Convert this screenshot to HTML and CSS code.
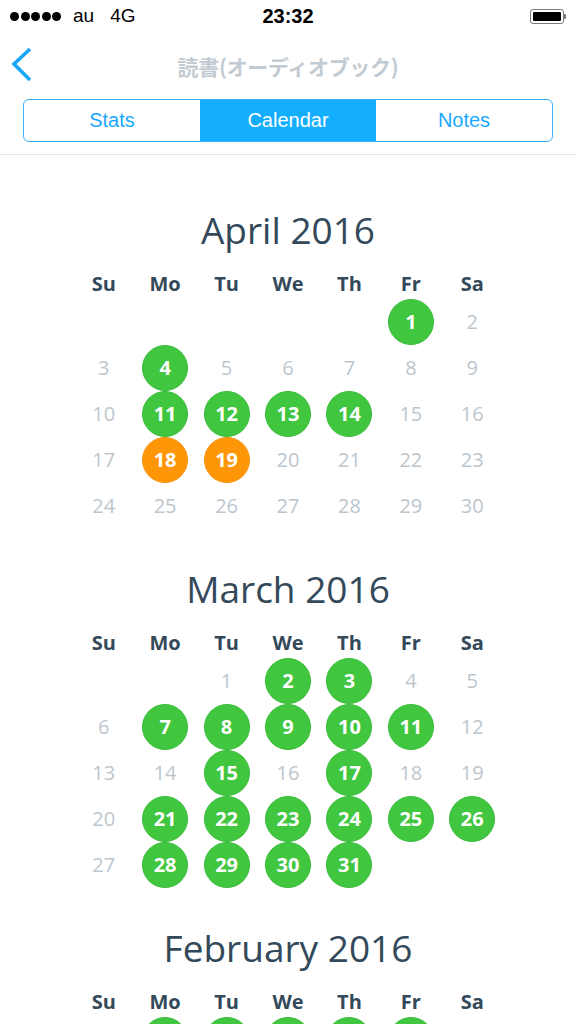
FILE: index.html
```html
<!DOCTYPE html>
<html lang="ja">
<head>
<meta charset="utf-8">
<title>読書(オーディオブック)</title>
<link rel="stylesheet" href="styles.css">
</head>
<body>
<header class="header">
  <div class="status">
    <div class="status-left">
      <span class="dots"><i></i><i></i><i></i><i></i><i></i></span>
      <span class="carrier">au</span>
      <span class="net">4G</span>
    </div>
    <div class="time">23:32</div>
    <div class="status-right">
      <span class="battery"><span class="battery-fill"></span></span><span class="battery-nub"></span>
    </div>
  </div>
  <nav class="nav">
    <a class="back" href="#" aria-label="Back">
      <svg width="24" height="36" viewBox="0 0 24 36"><polyline points="19,2 3,17 19,33" fill="none" stroke="#17a6f8" stroke-width="3.6" stroke-linecap="butt" stroke-linejoin="miter"/></svg>
    </a>
    <h1 class="nav-title">読書(オーディオブック)</h1>
    <span></span>
  </nav>
  <div class="segments">
    <div class="seg">Stats</div>
    <div class="seg seg-active">Calendar</div>
    <div class="seg">Notes</div>
  </div>
</header>

<main class="content">
  <section class="month">
    <h2 class="month-title">April 2016</h2>
    <div class="week"><span>Su</span><span>Mo</span><span>Tu</span><span>We</span><span>Th</span><span>Fr</span><span>Sa</span></div>
    <div class="days">
      <span></span><span></span><span></span><span></span><span></span>
      <span class="d g">1</span><span class="d">2</span>
      <span class="d">3</span><span class="d g">4</span><span class="d">5</span><span class="d">6</span><span class="d">7</span><span class="d">8</span><span class="d">9</span>
      <span class="d">10</span><span class="d g">11</span><span class="d g">12</span><span class="d g">13</span><span class="d g">14</span><span class="d">15</span><span class="d">16</span>
      <span class="d">17</span><span class="d o">18</span><span class="d o">19</span><span class="d">20</span><span class="d">21</span><span class="d">22</span><span class="d">23</span>
      <span class="d">24</span><span class="d">25</span><span class="d">26</span><span class="d">27</span><span class="d">28</span><span class="d">29</span><span class="d">30</span>
    </div>
  </section>

  <section class="month">
    <h2 class="month-title">March 2016</h2>
    <div class="week"><span>Su</span><span>Mo</span><span>Tu</span><span>We</span><span>Th</span><span>Fr</span><span>Sa</span></div>
    <div class="days">
      <span></span><span></span>
      <span class="d">1</span><span class="d g">2</span><span class="d g">3</span><span class="d">4</span><span class="d">5</span>
      <span class="d">6</span><span class="d g">7</span><span class="d g">8</span><span class="d g">9</span><span class="d g">10</span><span class="d g">11</span><span class="d">12</span>
      <span class="d">13</span><span class="d">14</span><span class="d g">15</span><span class="d">16</span><span class="d g">17</span><span class="d">18</span><span class="d">19</span>
      <span class="d">20</span><span class="d g">21</span><span class="d g">22</span><span class="d g">23</span><span class="d g">24</span><span class="d g">25</span><span class="d g">26</span>
      <span class="d">27</span><span class="d g">28</span><span class="d g">29</span><span class="d g">30</span><span class="d g">31</span>
    </div>
  </section>

  <section class="month">
    <h2 class="month-title">February 2016</h2>
    <div class="week"><span>Su</span><span>Mo</span><span>Tu</span><span>We</span><span>Th</span><span>Fr</span><span>Sa</span></div>
    <div class="days">
      <span></span>
      <span class="d g">1</span><span class="d g">2</span><span class="d g">3</span><span class="d g">4</span><span class="d g">5</span><span class="d">6</span>
      <span class="d">7</span><span class="d">8</span><span class="d">9</span><span class="d">10</span><span class="d">11</span><span class="d">12</span><span class="d">13</span>
    </div>
  </section>
</main>
</body>
</html>
```

FILE: styles.css
```css
html, body {
  margin: 0;
  padding: 0;
}

body {
  width: 576px;
  height: 1024px;
  overflow: hidden;
  background: #ffffff;
  font-family: "Open Sans", "Noto Sans", sans-serif;
}

/* ---------- header ---------- */
.header {
  padding-bottom: 12px;
  border-bottom: 1px solid #e2e6ea;
}

.status {
  height: 32px;
  display: grid;
  grid-template-columns: 1fr auto 1fr;
  align-items: center;
  padding: 0 10px;
  font-family: "Liberation Sans", Arial, sans-serif;
  font-size: 19px;
  color: #000;
}

.status-left {
  display: flex;
  align-items: center;
}

.dots {
  display: flex;
  gap: 1.5px;
}

.dots i {
  display: block;
  width: 9px;
  height: 9px;
  border-radius: 50%;
  background: #000;
}

.carrier {
  margin-left: 12px;
}

.net {
  margin-left: 16px;
}

.time {
  font-weight: bold;
  font-size: 20px;
}

.status-right {
  display: flex;
  justify-content: flex-end;
  align-items: center;
}

.battery {
  box-sizing: border-box;
  width: 34px;
  height: 15px;
  border: 1px solid #7a7a7a;
  border-radius: 3px;
  padding: 2px;
  display: flex;
}

.battery-fill {
  flex: 1;
  background: #000;
  border-radius: 1px;
}

.battery-nub {
  width: 2px;
  height: 5px;
  background: #7a7a7a;
  border-radius: 0 1px 1px 0;
  margin-right: 0;
}

.nav {
  height: 67px;
  display: grid;
  grid-template-columns: 1fr auto 1fr;
  align-items: center;
}

.back {
  justify-self: start;
  display: flex;
  margin-left: 11px;
  margin-top: -2px;
}

.nav-title {
  margin: 0;
  font-family: "Noto Sans CJK JP", "Noto Sans", sans-serif;
  font-weight: bold;
  font-size: 21px;
  color: #c3cbd2;
  letter-spacing: -0.3px;
}

.segments {
  margin: 0 23px;
  height: 43px;
  box-sizing: border-box;
  border: 1.5px solid #3aaffb;
  border-radius: 6px;
  overflow: hidden;
  display: grid;
  grid-template-columns: 1fr 1fr 1fr;
  font-family: "Liberation Sans", Arial, sans-serif;
  font-size: 20px;
  color: #1aa8ff;
}

.seg {
  display: flex;
  align-items: center;
  justify-content: center;
}

.seg-active {
  background: #14aeff;
  color: #ffffff;
}

/* ---------- calendar ---------- */
.content {
  padding-top: 53px;
  display: flex;
  flex-direction: column;
  gap: 38px;
}

.month-title {
  margin: 0;
  height: 44px;
  line-height: 44px;
  text-align: center;
  font-weight: normal;
  font-size: 37px;
  color: #33495a;
}

.week,
.days {
  width: 430px;
  margin: 0 auto;
  display: grid;
  grid-template-columns: repeat(7, 1fr);
}

.week {
  margin-top: 17px;
  height: 30px;
  line-height: 30px;
  text-align: center;
  font-weight: bold;
  font-size: 20px;
  color: #33495a;
}

.days {
  grid-auto-rows: 46px;
}

.d {
  justify-self: center;
  width: 46px;
  height: 46px;
  line-height: 46px;
  text-align: center;
  font-size: 20px;
  color: #bcc6ce;
  border-radius: 50%;
  box-sizing: border-box;
}

.g {
  background: #41c640;
  border: 1px solid #34bb36;
  line-height: 44px;
  color: #ffffff;
  font-weight: bold;
}

.o {
  background: #ff9608;
  border: 1px solid #f79208;
  line-height: 44px;
  color: #ffffff;
  font-weight: bold;
}
```
